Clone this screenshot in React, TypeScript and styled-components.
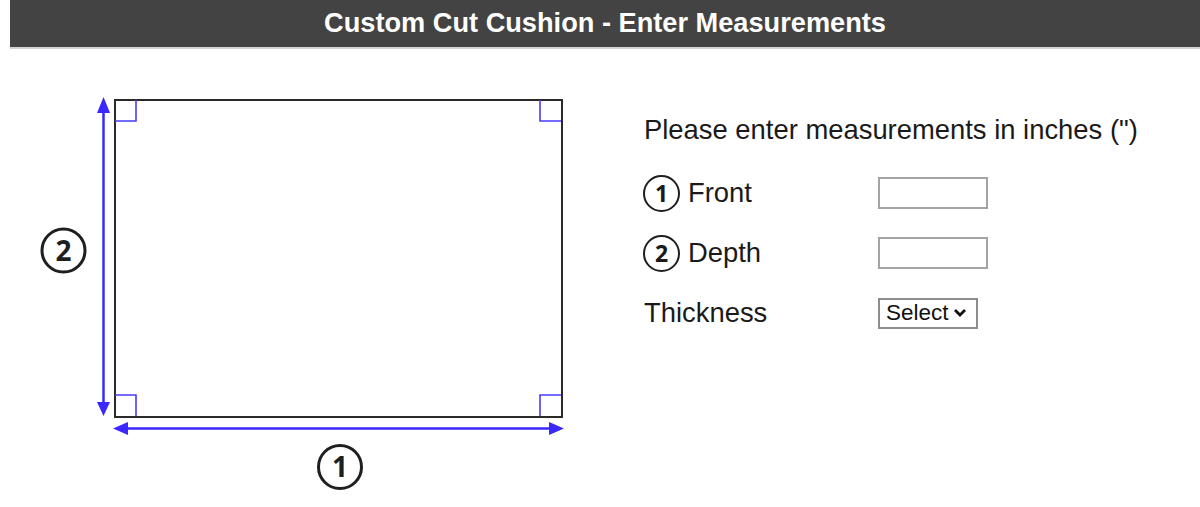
import React from 'react';
import styled, { createGlobalStyle } from 'styled-components';

const GlobalStyle = createGlobalStyle`
  body {
    margin: 0;
    background: #ffffff;
    font-family: "Liberation Sans", Arial, sans-serif;
    color: #1a1a1a;
  }
`;

const Header = styled.header`
  margin-left: 10px;
  height: 47px;
  background: #434343;
  border-bottom: 2px solid #d4d4d4;
  color: #ffffff;
  font-size: 27.2px;
  font-weight: 700;
  line-height: 46px;
  text-align: center;
`;

const Main = styled.main`
  display: flex;
  align-items: flex-start;
  gap: 69px;
  padding-left: 35px;
`;

const Diagram = styled.svg`
  display: block;
  margin-top: 41px;
  flex: none;
`;

const FormPanel = styled.section`
  margin-top: 65px;
  display: flex;
  flex-direction: column;
`;

const Intro = styled.p`
  margin: 0 0 17px;
  font-size: 27.4px;
  line-height: 32px;
`;

const Row = styled.div`
  display: grid;
  grid-template-columns: 234px auto;
  align-items: center;
  height: 60px;
`;

const Label = styled.label`
  display: flex;
  align-items: center;
  gap: 8px;
  font-size: 27.4px;
`;

const Badge = styled.span`
  display: inline-flex;
  align-items: center;
  justify-content: center;
  box-sizing: border-box;
  width: 37px;
  height: 37px;
  margin-left: -1px;
  padding-top: 1px;
  border: 2.5px solid #1f1f1f;
  border-radius: 50%;
  font-family: "Open Sans", "Liberation Sans", sans-serif;
  font-size: 23px;
  font-weight: 700;
  line-height: 1;
`;

const TextInput = styled.input`
  box-sizing: border-box;
  width: 110px;
  height: 32px;
  margin: 0;
  border: 2px solid #a3a3a3;
  background: #ffffff;
`;

const SelectBox = styled.div`
  box-sizing: border-box;
  display: inline-flex;
  align-items: center;
  gap: 4px;
  width: 100px;
  height: 31px;
  padding: 0 6px;
  border: 2px solid #8d8d8d;
  font-size: 22.5px;
  color: #111;
`;

const blue = '#3a28ff';

const Arrowhead: React.FC<{ points: string }> = ({ points }) => (
  <polygon points={points} fill={blue} />
);

const CircleNum: React.FC<{ cx: number; cy: number; n: string }> = ({ cx, cy, n }) => (
  <g>
    <circle cx={cx} cy={cy} r={21.5} fill="none" stroke="#1f1f1f" strokeWidth={3} />
    <text
      x={cx}
      y={cy + 10}
      textAnchor="middle"
      fontFamily="'Open Sans', 'Liberation Sans', sans-serif"
      fontWeight={700}
      fontSize={28}
      fill="#1f1f1f"
    >
      {n}
    </text>
  </g>
);

const App: React.FC = () => (
  <>
    <GlobalStyle />
    <Header>Custom Cut Cushion - Enter Measurements</Header>
    <Main>
      <Diagram width={540} height={410} viewBox="35 90 540 410">
        {/* cushion outline */}
        <rect x={115} y={100} width={447} height={317} fill="none" stroke="#2a2a2a" strokeWidth={2} />
        {/* corner squares */}
        <g fill="none" stroke="#4a3bff" strokeWidth={1.6}>
          <polyline points="136,100 136,121 115,121" />
          <polyline points="540,100 540,121 561,121" />
          <polyline points="115,395 136,395 136,416" />
          <polyline points="561,395 540,395 540,416" />
        </g>
        {/* depth arrow */}
        <line x1={103.5} y1={110} x2={103.5} y2={405} stroke={blue} strokeWidth={2.5} />
        <Arrowhead points="103.5,97 97,113 110,113" />
        <Arrowhead points="103.5,416 97,402 110,402" />
        {/* front arrow */}
        <line x1={124} y1={428.5} x2={553} y2={428.5} stroke={blue} strokeWidth={2.5} />
        <Arrowhead points="113,428.5 128,422 128,435" />
        <Arrowhead points="564,428.5 549,422 549,435" />
        <CircleNum cx={63.5} cy={250.5} n="2" />
        <CircleNum cx={340} cy={467} n="1" />
      </Diagram>

      <FormPanel>
        <Intro>Please enter measurements in inches (")</Intro>
        <Row>
          <Label>
            <Badge>1</Badge>Front
          </Label>
          <TextInput type="text" />
        </Row>
        <Row>
          <Label>
            <Badge>2</Badge>Depth
          </Label>
          <TextInput type="text" />
        </Row>
        <Row>
          <Label>Thickness</Label>
          <SelectBox>
            Select
            <svg width="14" height="10" viewBox="0 0 14 10">
              <polyline points="2,2 7,7 12,2" fill="none" stroke="#111" strokeWidth={2.8} />
            </svg>
          </SelectBox>
        </Row>
      </FormPanel>
    </Main>
  </>
);

export default App;
